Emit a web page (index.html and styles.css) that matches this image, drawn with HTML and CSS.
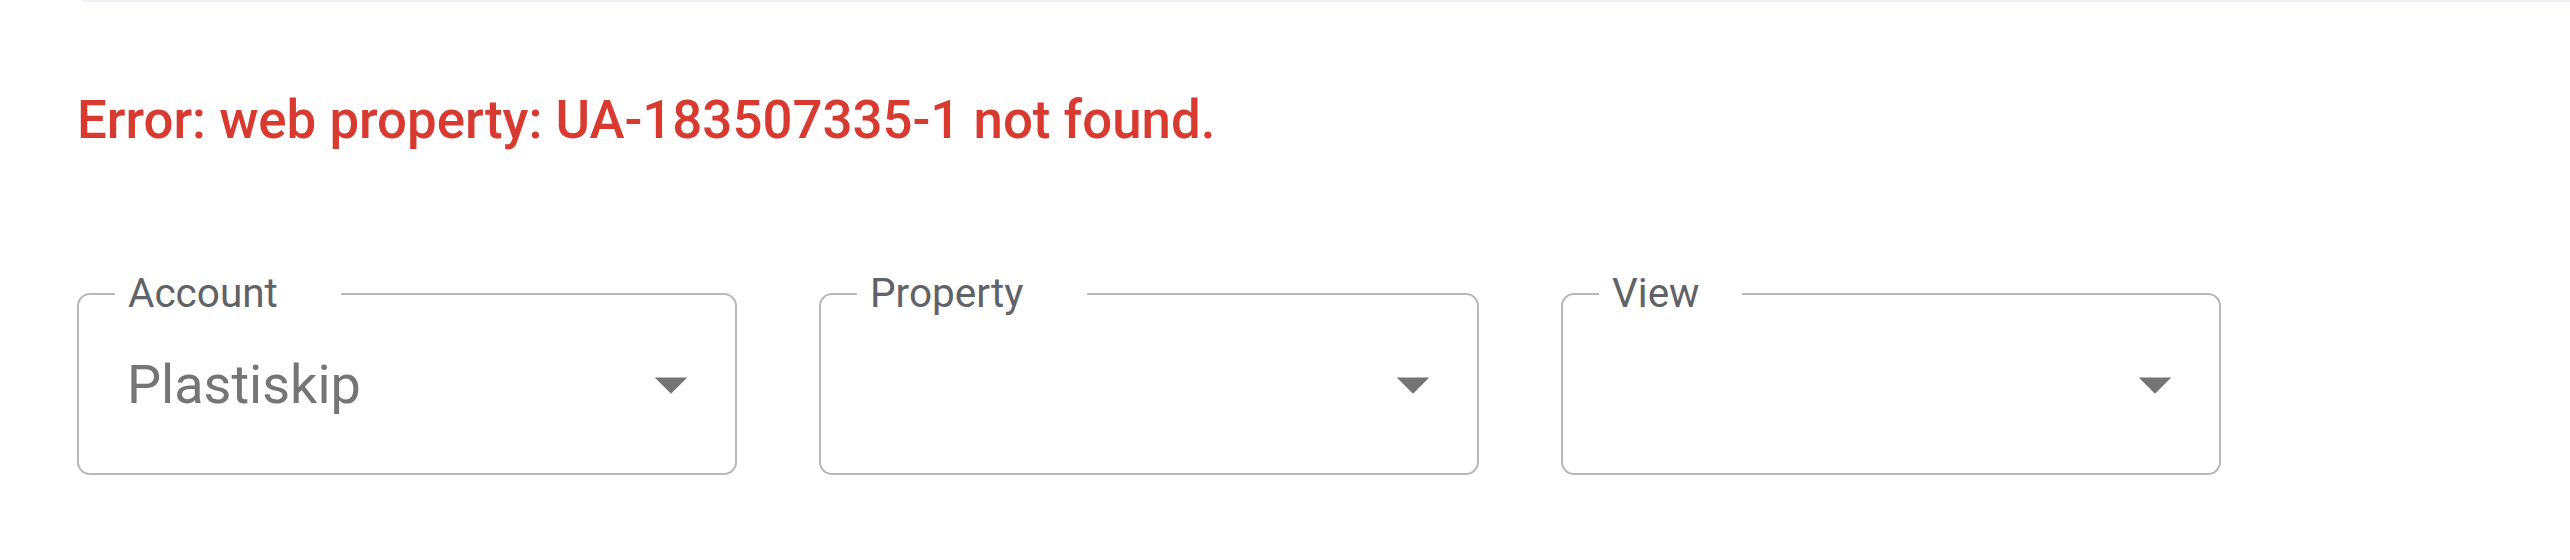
FILE: index.html
```html
<!DOCTYPE html>
<html lang="en">
<head>
<meta charset="utf-8">
<title>Analytics settings</title>
<link rel="stylesheet" href="styles.css">
</head>
<body>
<div class="topbar"></div>
<main class="content">
  <p class="error">Error: web property: UA-183507335-1 not found.</p>
  <div class="fields">
    <div class="select">
      <span class="notch"><span class="label-text">Account</span></span>
      <span class="value">Plastiskip</span>
      <svg class="arrow" viewBox="0 0 24 24" aria-hidden="true"><path d="M7 10l5 5 5-5z"/></svg>
    </div>
    <div class="select">
      <span class="notch"><span class="label-text">Property</span></span>
      <span class="value"></span>
      <svg class="arrow" viewBox="0 0 24 24" aria-hidden="true"><path d="M7 10l5 5 5-5z"/></svg>
    </div>
    <div class="select">
      <span class="notch"><span class="label-text">View</span></span>
      <span class="value"></span>
      <svg class="arrow" viewBox="0 0 24 24" aria-hidden="true"><path d="M7 10l5 5 5-5z"/></svg>
    </div>
  </div>
</main>
</body>
</html>
```

FILE: styles.css
```css
html, body {
  margin: 0;
  padding: 0;
  background: #ffffff;
}

body {
  font-family: Roboto, "Liberation Sans", Arial, sans-serif;
  overflow: hidden;
}

.topbar {
  margin-left: 83px;
  height: 2px;
  background: #edf1f8;
}

.content {
  padding-left: 77px;
}

.error {
  margin: 92px 0 0 0;
  font-size: 52.8px;
  line-height: 52px;
  font-weight: 500;
  color: #d93a30;
}

.fields {
  margin-top: 147px;
  display: flex;
  gap: 82px;
}

.select {
  position: relative;
  box-sizing: border-box;
  width: 660px;
  height: 182px;
  border: 2px solid #b8b8b8;
  border-radius: 13px;
  display: flex;
  align-items: center;
  padding: 0 25px 0 48px;
}

.notch {
  position: absolute;
  left: 36px;
  top: -28px;
  height: 52px;
  font-size: 54px;
  line-height: 52px;
  padding: 0 13px 0 13px;
  background: #ffffff;
  white-space: nowrap;
}

.label-text {
  display: inline-block;
  transform: scale(0.75);
  transform-origin: left center;
  color: #5f6368;
}

.value {
  flex: 1;
  font-size: 54px;
  color: #757575;
  white-space: nowrap;
}

.arrow {
  width: 78px;
  height: 78px;
  flex: none;
  fill: #757575;
}
```
